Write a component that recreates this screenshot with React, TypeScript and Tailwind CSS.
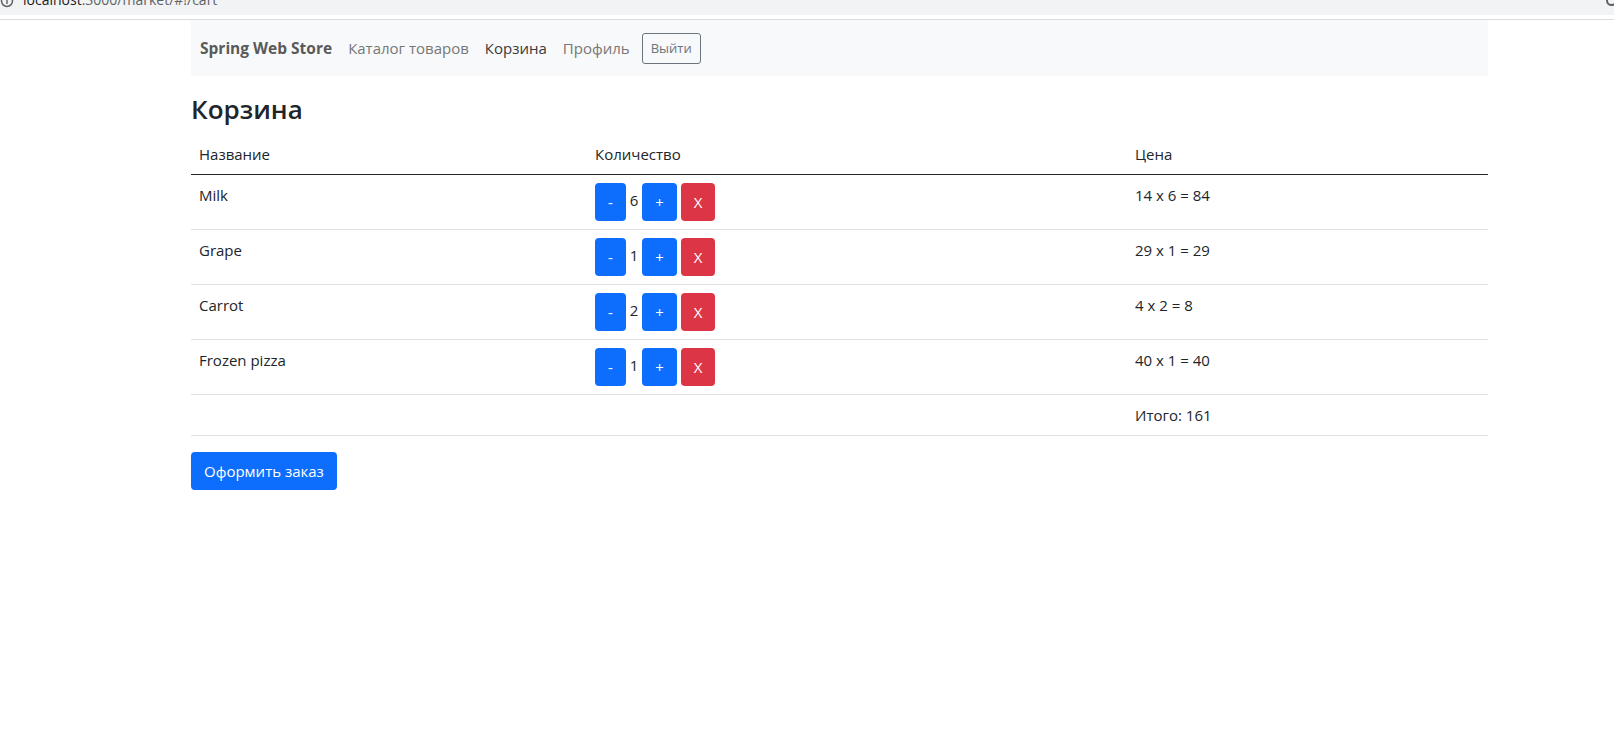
type CartItem = {
  title: string
  price: number
  quantity: number
}

const ITEMS: CartItem[] = [
  { title: 'Milk', price: 14, quantity: 6 },
  { title: 'Grape', price: 29, quantity: 1 },
  { title: 'Carrot', price: 4, quantity: 2 },
  { title: 'Frozen pizza', price: 40, quantity: 1 },
]

// Bootstrap-like button; Open Sans runs wider than Segoe UI so text is 15px
const btn = 'inline-block rounded-[4px] border border-transparent px-3 py-1.5 align-middle text-[15px] leading-6 text-white'

function AddressBar() {
  return (
    <div>
      <div className="flex h-[15px] items-start overflow-hidden bg-[#f1f3f4]">
        <svg width="14" height="14" viewBox="0 0 14 14" className="-mt-[6px] shrink-0">
          <circle cx="7" cy="7" r="5.5" fill="none" stroke="#5f6368" strokeWidth="1.5" />
          <rect x="6.3" y="6" width="1.4" height="4" fill="#5f6368" />
        </svg>
        <span className="-mt-[7px] ml-[9px] text-[14px] leading-[14px]">
          <span className="text-[#202124]">localhost</span>
          <span className="text-[#5f6368]">:3000/market/#!/cart</span>
        </span>
        <div className="ml-auto -mt-[5px] mr-[-3px] size-[11px] rounded-full border-2 border-[#5f6368]" />
      </div>
      <div className="h-[4px] bg-white" />
      <div className="h-px bg-[#dadce0]" />
    </div>
  )
}

function Navbar() {
  return (
    <nav className="flex h-[56px] items-center bg-[#f8f9fa] pl-[9px] text-[15px]">
      <span className="mr-2 text-[15.5px] font-bold leading-6 text-[#595959]">Spring Web Store</span>
      <a className="px-2 py-2 leading-6 text-[#777]">Каталог товаров</a>
      <a className="px-2 py-2 leading-6 text-[#3a3a3a]">Корзина</a>
      <a className="px-2 py-2 leading-6 text-[#777]">Профиль</a>
      <button className="ml-[4px] rounded-[3px] border border-[#6c757d] px-2 py-1 text-[13px] leading-[21px] text-[#6c757d]">
        Выйти
      </button>
    </nav>
  )
}

export default function App() {
  const total = ITEMS.reduce((sum, item) => sum + item.price * item.quantity, 0)

  return (
    <div className="min-h-screen bg-white font-['Open_Sans',sans-serif] text-[#212529]">
      <AddressBar />
      <div className="ml-[191px] w-[1297px]">
        <Navbar />

        <h3 className="mt-4 mb-2 h-[34px] text-[26px] leading-[34px] font-semibold">Корзина</h3>

        <table className="mb-4 w-full table-fixed border-collapse text-[15px] leading-6">
          <colgroup>
            <col className="w-[396px]" />
            <col className="w-[540px]" />
            <col />
          </colgroup>
          <thead>
            <tr className="border-b border-[#212529]">
              <th className="px-2 py-2 text-left font-normal">Название</th>
              <th className="px-2 py-2 text-left font-normal">Количество</th>
              <th className="px-2 py-2 text-left font-normal">Цена</th>
            </tr>
          </thead>
          <tbody>
            {ITEMS.map((item) => (
              <tr key={item.title} className="border-b border-[#dee2e6] align-top">
                <td className="px-2 py-2">{item.title}</td>
                <td className="px-2 py-2">
                  <button className={`${btn} bg-[#0d6efd]`}>-</button> {item.quantity}{' '}
                  <button className={`${btn} bg-[#0d6efd]`}>+</button>{' '}
                  <button className={`${btn} bg-[#dc3545]`}>X</button>
                </td>
                <td className="px-2 py-2">
                  {item.price} x {item.quantity} = {item.price * item.quantity}
                </td>
              </tr>
            ))}
            <tr className="border-b border-[#dee2e6]">
              <td className="px-2 py-2" />
              <td className="px-2 py-2" />
              <td className="px-2 py-2">Итого: {total}</td>
            </tr>
          </tbody>
        </table>

        <button className={`${btn} bg-[#0d6efd]`}>Оформить заказ</button>
      </div>
    </div>
  )
}
